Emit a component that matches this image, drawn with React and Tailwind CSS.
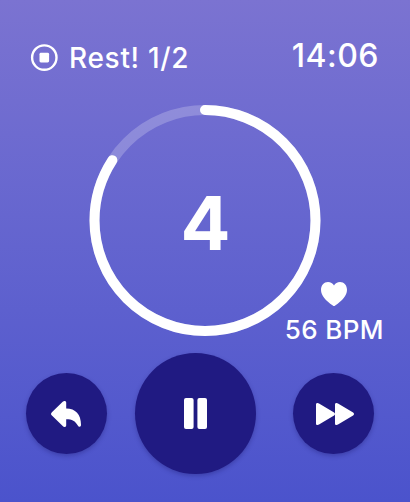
import React from "react";

const RADIUS = 110.5;
const CIRCUMFERENCE = 2 * Math.PI * RADIUS;

const StopIcon = () => (
  <svg width="28" height="28" viewBox="0 0 28 28" fill="none">
    <circle cx="14.3" cy="13.6" r="12.2" stroke="white" strokeWidth="2.4" />
    <rect x="9.5" y="8.8" width="9.6" height="9.6" rx="1.4" fill="white" />
  </svg>
);

const HeartIcon = () => (
  <svg width="26" height="24" viewBox="0 0 26 24" fill="white">
    <path d="M13 24C12.6 24 12.2 23.7 11.8 23.4C4.8 18.9 0 13.7 0 7.8C0 3.2 3 0 7 0C9.6 0 11.8 1.3 13 3.6C14.2 1.3 16.4 0 19 0C23 0 26 3.2 26 7.8C26 13.7 21.2 18.9 14.2 23.4C13.8 23.7 13.4 24 13 24Z" />
  </svg>
);

const ReplyIcon = () => (
  <svg width="30" height="26" viewBox="0 0 30 26" fill="white">
    <path d="M15.2 1.6V7.4C24.5 7.4 30 13.2 30 23.8C30 25 29.5 25.8 28.6 25.8C27.8 25.8 27.3 25.3 26.8 24.4C24.3 20 21.2 18.2 15.2 18.2V24.2C15.2 25.3 14.5 26 13.5 26C12.8 26 12.3 25.7 11.7 25.1L0.9 14.6C0.3 14 0 13.4 0 12.9C0 12.4 0.3 11.8 0.9 11.2L11.7 0.8C12.3 0.3 12.9 0 13.5 0C14.5 0 15.2 0.6 15.2 1.6Z" />
  </svg>
);

const PauseIcon = () => (
  <svg width="23" height="31" viewBox="0 0 23 31" fill="white">
    <rect x="0" y="0" width="9.6" height="31" rx="2" />
    <rect x="13.4" y="0" width="9.6" height="31" rx="2" />
  </svg>
);

const ForwardIcon = () => (
  <svg width="38" height="22" viewBox="0 0 38 22" fill="white">
    <path d="M0 1.5V20.5C0 21.5 .6 22 1.5 22C2.1 22 2.5 21.8 3 21.5L18.1 12.5C18.8 12.1 19 11.6 19 11C19 10.4 18.8 9.9 18.1 9.5L3 .5C2.5 .2 2.1 0 1.5 0C.6 0 0 .5 0 1.5Z" />
    <path d="M19 1.5V20.5C19 21.5 19.6 22 20.5 22C21.1 22 21.5 21.8 22 21.5L37.1 12.5C37.8 12.1 38 11.6 38 11C38 10.4 37.8 9.9 37.1 9.5L22 .5C21.5 .2 21.1 0 20.5 0C19.6 0 19 .5 19 1.5Z" />
  </svg>
);

const TimerRing = ({ seconds, progress }) => (
  <div className="grid size-[232px] place-items-center">
    <svg
      className="col-start-1 row-start-1"
      width="232"
      height="232"
      viewBox="0 0 232 232"
      fill="none"
      stroke="white"
      strokeWidth="10"
    >
      <circle cx="116" cy="115.5" r={RADIUS} strokeOpacity="0.22" />
      <circle
        cx="116"
        cy="115.5"
        r={RADIUS}
        strokeLinecap="round"
        strokeDasharray={`${CIRCUMFERENCE * progress} ${CIRCUMFERENCE}`}
        transform="rotate(-90 116 115.5)"
      />
    </svg>
    <span className="col-start-1 row-start-1 pt-1 pl-px text-[74px] leading-none font-bold">
      {seconds}
    </span>
  </div>
);

const RoundButton = ({ label, className, children }) => (
  <button
    aria-label={label}
    className={`flex shrink-0 items-center justify-center rounded-full bg-[#201a82] shadow-[0_2px_4px_rgba(30,25,110,0.35)] ${className}`}
  >
    {children}
  </button>
);

export default function App() {
  return (
    <main className="flex h-[502px] w-[410px] flex-col overflow-hidden bg-linear-to-b from-[#7b73d1] to-[#4b53cc] font-['Inter',sans-serif] text-white">
      <header className="flex h-[105px] items-start justify-between pt-[38px] pr-[31px] pl-[30px]">
        <div className="flex items-center gap-[11px] pt-0.5">
          <StopIcon />
          <span className="text-[28px] leading-9 font-medium tracking-[0.7px]">
            Rest! 1/2
          </span>
        </div>
        <span className="text-[32px] leading-9 font-medium tracking-[0.5px]">
          14:06
        </span>
      </header>

      <section className="relative flex h-[248px] justify-center">
        <TimerRing seconds={4} progress={0.841} />
        <div className="absolute top-[177px] right-[26px] flex flex-col items-center gap-2">
          <HeartIcon />
          <span className="text-[26px] leading-8 font-medium tracking-[0.4px]">
            56 BPM
          </span>
        </div>
      </section>

      <footer className="flex items-center pl-[26px]">
        <RoundButton label="Back" className="size-[81px] pr-0.5">
          <ReplyIcon />
        </RoundButton>
        <RoundButton label="Pause" className="ml-7 size-[121px]">
          <PauseIcon />
        </RoundButton>
        <RoundButton label="Skip" className="ml-[37px] size-[81px] pl-0.5">
          <ForwardIcon />
        </RoundButton>
      </footer>
    </main>
  );
}
